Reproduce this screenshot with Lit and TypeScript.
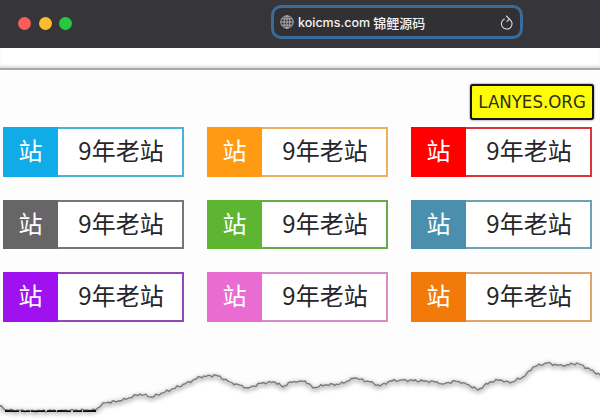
import { LitElement, html, css, svg } from "lit";
import { customElement } from "lit/decorators.js";

const BADGES = [
  ["#10ace8", "#45b3d6"],
  ["#ff9a12", "#eab060"],
  ["#fe0000", "#d8343c"],
  ["#676568", "#77757a"],
  ["#5db531", "#69a84f"],
  ["#4a90ae", "#6ea0b6"],
  ["#a011f0", "#8f4ab8"],
  ["#e86cd2", "#d88cc6"],
  ["#f17a0b", "#e0a468"],
];

const ANCHORS: [number, number][] = [
  [-2, 405], [3, 408], [7, 410], [30, 411], [60, 410.5], [96, 410], [103, 403], [120, 401], [140, 394],
  [152, 397], [165, 392], [185, 384], [200, 377], [216, 375], [230, 382], [236, 384], [248, 388],
  [262, 383], [275, 382], [283, 387], [290, 382], [300, 381], [305, 381], [313, 388], [325, 385],
  [340, 384], [355, 378], [370, 382], [380, 386], [390, 381], [400, 380], [425, 381], [437, 382],
  [443, 384], [455, 381], [465, 383], [478, 390], [490, 382], [500, 380], [510, 383], [525, 376],
  [533, 367], [547, 363], [557, 365], [563, 366], [577, 363], [587, 368], [602, 376],
];

function tornPoints(): string {
  const pts: string[] = [];
  let k = 0;
  for (let i = 0; i < ANCHORS.length - 1; i++) {
    const [x0, y0] = ANCHORS[i];
    const [x1, y1] = ANCHORS[i + 1];
    const n = Math.max(1, Math.round((x1 - x0) / 2));
    for (let j = 0; j < n; j++) {
      const t = j / n;
      const noise = j === 0 ? 0 : Math.sin(k * 2.3) * 0.8 + Math.sin(k * 5.1) * 0.6;
      pts.push(`${(x0 + (x1 - x0) * t).toFixed(1)},${(y0 + (y1 - y0) * t + noise).toFixed(1)}`);
      k++;
    }
  }
  pts.push(`602,376`);
  return pts.join(" ");
}

@customElement("app-root")
export class AppRoot extends LitElement {
  static styles = css`
    :host {
      display: block;
      position: relative;
      width: 600px;
      height: 420px;
      overflow: hidden;
      background: #fdfdfe;
      font-family: "Noto Sans CJK SC", "Noto Sans", sans-serif;
    }
    .titlebar {
      height: 48px;
      background: #363539;
      display: flex;
      align-items: center;
      padding-left: 18px;
      box-sizing: border-box;
    }
    .lights {
      display: flex;
      gap: 7.5px;
      margin-top: -2px;
      width: 253px;
    }
    .light {
      width: 13px;
      height: 13px;
      border-radius: 50%;
    }
    .red { background: #f95d5a; }
    .yellow { background: #fdbb2d; }
    .green { background: #27c840; }
    .url {
      width: 252px;
      height: 34px;
      box-sizing: border-box;
      border: 3px solid #3a6b99;
      border-radius: 10px;
      margin-top: -4px;
      background: #313135;
      display: flex;
      align-items: center;
      padding: 0 7px 0 6px;
      color: #f4f4f4;
    }
    .globe { width: 14px; height: 14px; margin-right: 4px; flex: none; }
    .domain { font-family: Inter, "Noto Sans", sans-serif; font-weight: 500; font-size: 12.5px; }
    .brand { margin-left: 3px; font-size: 13px; font-weight: 500; flex: 1; }
    .reload { width: 13px; height: 15px; flex: none; margin-top: 1px; }
    .band {
      height: 20px;
      background: #fff;
      border-bottom: 2px solid #a9a9a9;
      box-shadow: inset 0 -3px 3px -1px #ddd;
    }
    .content {
      display: flex;
      flex-direction: column;
      padding: 14px 6px 0 3px;
    }
    .tag {
      align-self: flex-end;
      width: 124px;
      height: 36px;
      box-sizing: border-box;
      border: 2px solid #16161a;
      border-radius: 3px;
      background: #fdfd0a;
      box-shadow: 0 0 2px #555;
      color: #2e2e1a;
      font-family: "DejaVu Sans Condensed", "DejaVu Sans", sans-serif;
      font-stretch: condensed;
      font-size: 18.5px;
      line-height: 32px;
      text-align: center;
    }
    .grid {
      display: grid;
      grid-template-columns: repeat(3, 181px);
      column-gap: 23px;
      row-gap: 23px;
      margin-top: 7px;
    }
    .badge {
      display: flex;
      height: 49.5px;
      box-sizing: border-box;
      border: 2px solid;
      background: #fff;
      font-size: 24px;
      line-height: 24px;
    }
    .head {
      width: 55px;
      flex: none;
      display: flex;
      align-items: center;
      justify-content: center;
      color: #fff;
      margin: -2px 0 -2px -2px;
      padding: 0 0 3px 0;
      box-sizing: border-box;
    }
    .body {
      flex: 1;
      display: flex;
      align-items: center;
      justify-content: center;
      color: #26262a;
      padding: 0 0 3px 2px;
    }
    .torn {
      position: absolute;
      left: 0;
      top: 0;
      width: 600px;
      height: 420px;
      pointer-events: none;
    }
  `;

  render() {
    const pts = tornPoints();
    const area = `${pts} 602,422 -2,422`;
    return html`
      <div class="titlebar">
        <div class="lights">
          <span class="light red"></span>
          <span class="light yellow"></span>
          <span class="light green"></span>
        </div>
        <div class="url">
          <svg class="globe" viewBox="0 0 14 14" fill="none" stroke="#bdbdbd" stroke-width="0.9">
            <circle cx="7" cy="7" r="6.2" />
            <ellipse cx="7" cy="7" rx="2.9" ry="6.2" />
            <path d="M7 .8v12.4M.8 7h12.4M1.7 3.9h10.6M1.7 10.1h10.6" />
          </svg>
          <span class="domain">koicms.com</span>
          <span class="brand">锦鲤源码</span>
          <svg class="reload" viewBox="0 0 13 15" fill="none" stroke="#d8d8d8" stroke-width="1.1" stroke-linecap="round" stroke-linejoin="round">
            <path d="M4.4 4A5.3 5.3 0 1 0 9.4 4.2" />
            <path d="M6.4 1 9.4 4 7 6.4" />
          </svg>
        </div>
      </div>
      <div class="band"></div>
      <div class="content">
        <div class="tag">LANYES.ORG</div>
        <div class="grid">
          ${BADGES.map(
            ([fill, line]) => html`
              <div class="badge" style="border-color:${line}">
                <div class="head" style="background:${fill}">站</div>
                <div class="body">9年老站</div>
              </div>
            `
          )}
        </div>
      </div>
      <svg class="torn" viewBox="0 0 600 420">
        <defs>
          <filter id="soft" x="-5%" y="-50%" width="110%" height="200%">
            <feGaussianBlur stdDeviation="2" />
          </filter>
          <filter id="softer" x="-5%" y="-50%" width="110%" height="200%">
            <feGaussianBlur stdDeviation="0.5" />
          </filter>
        </defs>
        ${svg`
          <polygon points=${area} fill="#ffffff" />
          <polyline points=${pts} fill="none" stroke="#aaa" stroke-width="3" filter="url(#soft)" transform="translate(0 1.5)" />
          <polyline points=${pts} fill="none" stroke="#777" stroke-width="1.3" filter="url(#softer)" />
          <polyline points="5,411 30,411.5 60,411 70,411.5 96,411" fill="none" stroke="#111" stroke-width="1.8" stroke-dasharray="14 2 9 1" filter="url(#softer)" />
        `}
      </svg>
    `;
  }
}
